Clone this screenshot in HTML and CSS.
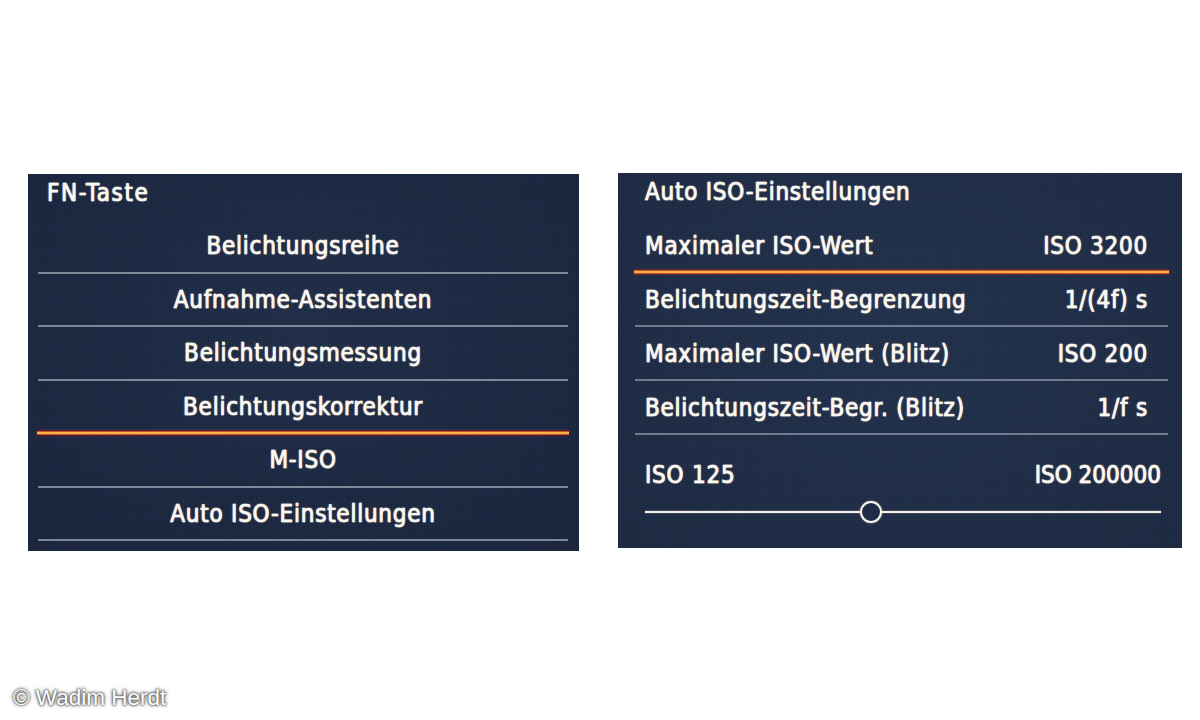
FILE: index.html
```html
<!DOCTYPE html>
<html lang="de">
<head>
<meta charset="utf-8">
<title>FN-Taste / Auto ISO-Einstellungen</title>
<link rel="stylesheet" href="styles.css">
</head>
<body>
<main class="page">
  <div class="screens">
    <section class="screen screen-fn">
      <h1 class="screen-title">FN-Taste</h1>
      <ul class="fn-list">
        <li class="fn-item">Belichtungsreihe</li>
        <li class="fn-item">Aufnahme-Assistenten</li>
        <li class="fn-item">Belichtungsmessung</li>
        <li class="fn-item is-selected">Belichtungskorrektur</li>
        <li class="fn-item">M-ISO</li>
        <li class="fn-item">Auto ISO-Einstellungen</li>
      </ul>
    </section>

    <section class="screen screen-iso">
      <h1 class="screen-title">Auto ISO-Einstellungen</h1>
      <ul class="iso-list">
        <li class="iso-row is-selected"><span>Maximaler ISO-Wert</span><span>ISO 3200</span></li>
        <li class="iso-row"><span>Belichtungszeit-Begrenzung</span><span>1/(4f) s</span></li>
        <li class="iso-row"><span>Maximaler ISO-Wert (Blitz)</span><span>ISO 200</span></li>
        <li class="iso-row"><span>Belichtungszeit-Begr. (Blitz)</span><span>1/f s</span></li>
      </ul>
      <div class="range">
        <div class="range-labels"><span>ISO 125</span><span class="range-max">ISO 200000</span></div>
        <div class="range-track">
          <span class="range-knob" style="left: 43.9%"></span>
        </div>
      </div>
    </section>
  </div>
  <p class="credit">© Wadim Herdt</p>
</main>
</body>
</html>
```
FILE: styles.css
```css
html, body {
  margin: 0;
  padding: 0;
  background: #ffffff;
}

.page {
  width: 1200px;
  height: 720px;
  display: flex;
  flex-direction: column;
}

.screens {
  display: flex;
  align-items: flex-start;
  gap: 39px;
  padding: 173px 0 0 28px;
}

.screen {
  box-sizing: border-box;
  font-family: "DejaVu Sans Condensed", "DejaVu Sans", sans-serif;
  font-stretch: condensed;
  color: #fbf8f2;
  font-weight: 400;
  font-size: 24px;
  letter-spacing: 0.75px;
  -webkit-text-stroke: 0.6px #fbf8f2;
  text-shadow: 0 0 2px rgba(255, 226, 190, 0.6), 0 0 1px rgba(255, 255, 255, 0.7);
  background-color: #1e2a43;
  background-image:
    repeating-linear-gradient(0deg, rgba(0, 0, 0, 0.06) 0 1px, transparent 1px 3px),
    repeating-linear-gradient(90deg, rgba(0, 0, 0, 0.06) 0 1px, transparent 1px 3px),
    radial-gradient(ellipse at 50% 40%, #22304b 0%, #1c2740 100%);
}

.screen ul {
  list-style: none;
  margin: 0;
  padding: 0;
}

.screen-title {
  margin: 0;
  font: inherit;
  line-height: 38px;
}

/* FN key menu */
.screen-fn {
  width: 551px;
  height: 377px;
  margin-top: 1px;
  padding: 0 11px 0 10px;
}

.screen-fn .screen-title {
  padding-left: 9px;
  letter-spacing: 1.6px;
}

.fn-list {
  margin-top: 8px !important;
}

.fn-item {
  height: 51.5px;
  line-height: 53px;
  text-align: center;
  border-bottom: 2px solid #7d8798;
}

/* Auto ISO settings */
.screen-iso {
  width: 564px;
  height: 375px;
  padding: 0 14px 0 17px;
  background-color: #213049;
  background-image:
    repeating-linear-gradient(0deg, rgba(0, 0, 0, 0.06) 0 1px, transparent 1px 3px),
    repeating-linear-gradient(90deg, rgba(0, 0, 0, 0.06) 0 1px, transparent 1px 3px),
    radial-gradient(ellipse at 50% 40%, #24344f 0%, #1f2c45 100%);
}

.screen-iso .screen-title {
  padding-left: 10px;
}

.iso-list {
  margin-top: 8px !important;
}

.iso-row {
  display: flex;
  justify-content: space-between;
  height: 52px;
  line-height: 54px;
  padding: 0 20px 0 10px;
  border-bottom: 2px solid #6f7b8e;
}

/* highlighted entry: yellow core with a red rim */
.is-selected {
  border-bottom: none;
  position: relative;
}

.is-selected::after {
  content: "";
  position: absolute;
  left: -1px;
  right: -1px;
  bottom: -1px;
  height: 4px;
  background: linear-gradient(180deg, #c8121c 0%, #f0b43e 35%, #f7d257 55%, #c8121c 100%);
  box-shadow: 0 0 3px rgba(230, 40, 30, 0.6);
}

.fn-item.is-selected {
  height: 53.5px;
}

.iso-row.is-selected {
  height: 54px;
}

.range {
  padding: 20px 7px 0 10px;
}

.range-labels {
  display: flex;
  justify-content: space-between;
  line-height: 40px;
}

.range-max {
  letter-spacing: 0;
}

.range-track {
  position: relative;
  height: 2px;
  margin-top: 16px;
  background: #f4f1ea;
  box-shadow: 0 0 2px rgba(255, 226, 190, 0.5);
}

.range-knob {
  position: absolute;
  top: 50%;
  width: 18px;
  height: 18px;
  margin: -11.5px 0 0 -11.5px;
  border: 2.5px solid #f7f4ee;
  border-radius: 50%;
  background: #1f2c45;
  box-shadow: 0 0 2px rgba(255, 226, 190, 0.6);
}

.credit {
  margin: auto 0 10px 13px;
  font-family: "Liberation Sans", Arial, sans-serif;
  font-size: 22.5px;
  line-height: 24px;
  color: #ffffff;
  text-shadow: 0 0 2px #444, 0 0 3px #555, 0 0 4px #777;
}
```
